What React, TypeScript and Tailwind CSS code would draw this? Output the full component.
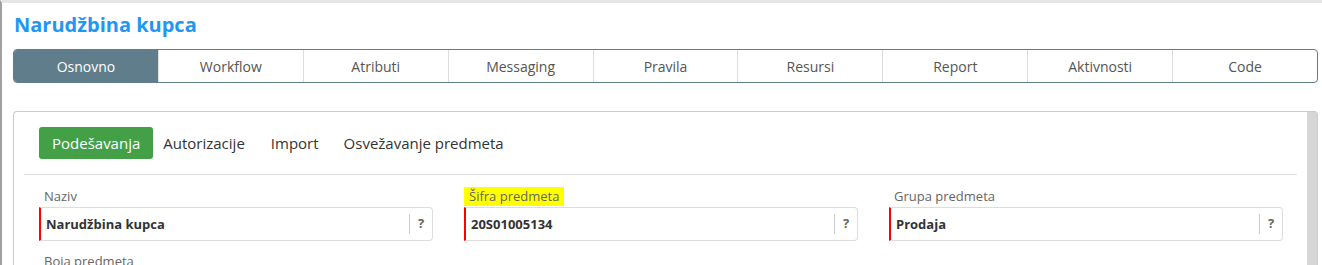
const tabs = ["Osnovno", "Workflow", "Atributi", "Messaging", "Pravila", "Resursi", "Report", "Aktivnosti", "Code"];

const fields = [
  { label: "Naziv", value: "Narudžbina kupca", highlight: false },
  { label: "Šifra predmeta", value: "20S01005134", highlight: true },
  { label: "Grupa predmeta", value: "Prodaja", highlight: false },
];

export default function App() {
  return (
    <div
      className="h-[265px] w-[1322px] overflow-hidden bg-white border-l-2 border-[#a0a0a0] border-t-[3px] border-t-[#e6e6e6]"
      style={{ fontFamily: '"Open Sans", sans-serif' }}
    >
      <div className="pl-[11px] pr-[4px]">
        {/* title */}
        <h1 className="pt-[8px] pl-[1px] text-[20px] font-bold leading-[28px] text-[#2196f3]">Narudžbina kupca</h1>

        {/* main tabs */}
        <div className="mt-[10px] flex h-[34px] rounded-[4px] border border-[#5f7d8b] overflow-hidden">
          {tabs.map((t, i) => (
            <div
              key={t}
              className={
                i === 0
                  ? "flex flex-1 items-center justify-center bg-[#607d8b] text-[14px] text-white"
                  : "flex flex-1 items-center justify-center border-l border-[#dddddd] text-[14px] text-[#555555]"
              }
            >
              {t}
            </div>
          ))}
        </div>

        {/* card */}
        <div className="mt-[28px] flex rounded-t-[4px] border border-[#cccccc] border-b-0">
          <div className="flex-1 px-[10px]">
            <div className="flex items-center pl-[15px] pt-[15px] pb-[15px]">
              <div className="flex h-[32px] items-center rounded-[3px] bg-[#43a047] px-[13px] text-[15px] text-white">Podešavanja</div>
              <div className="ml-[10px] text-[15px] text-[#333333]">Autorizacije</div>
              <div className="ml-[26px] text-[15px] text-[#333333]">Import</div>
              <div className="ml-[25px] text-[15px] text-[#333333]">Osvežavanje predmeta</div>
            </div>
            <div className="border-t border-[#dddddd]" />

            <div className="grid grid-cols-3 gap-x-[31px] pl-[15px] pr-[14px] pt-[10px]">
              {fields.map((f) => (
                <div key={f.label}>
                  <div className="flex h-[21px] items-end">
                    <span
                      className={
                        f.highlight
                          ? "bg-[#ffff00] px-[5px] text-[13px] leading-[19px] text-[#666666]"
                          : "px-[5px] text-[13px] leading-[19px] text-[#666666]"
                      }
                    >
                      {f.label}
                    </span>
                  </div>
                  <div className="mt-[1px] flex h-[34px] items-center rounded-r-[4px] border border-l-2 border-[#dddddd] border-l-[#ff0000]">
                    <span className="flex-1 pl-[5px] pt-[1px] text-[13px] font-bold text-[#333333]">{f.value}</span>
                    <span className="h-[20px] border-l border-[#cccccc]" />
                    <span className="w-[22px] text-center text-[13px] font-bold text-[#666666]">?</span>
                  </div>
                </div>
              ))}
            </div>
            <div className="pl-[20px] pt-[11px] text-[13px] leading-[19px] text-[#666666]">Boja predmeta</div>
          </div>
          <div className="w-[10px] bg-[#d6d6d6]" />
        </div>
      </div>
    </div>
  );
}
